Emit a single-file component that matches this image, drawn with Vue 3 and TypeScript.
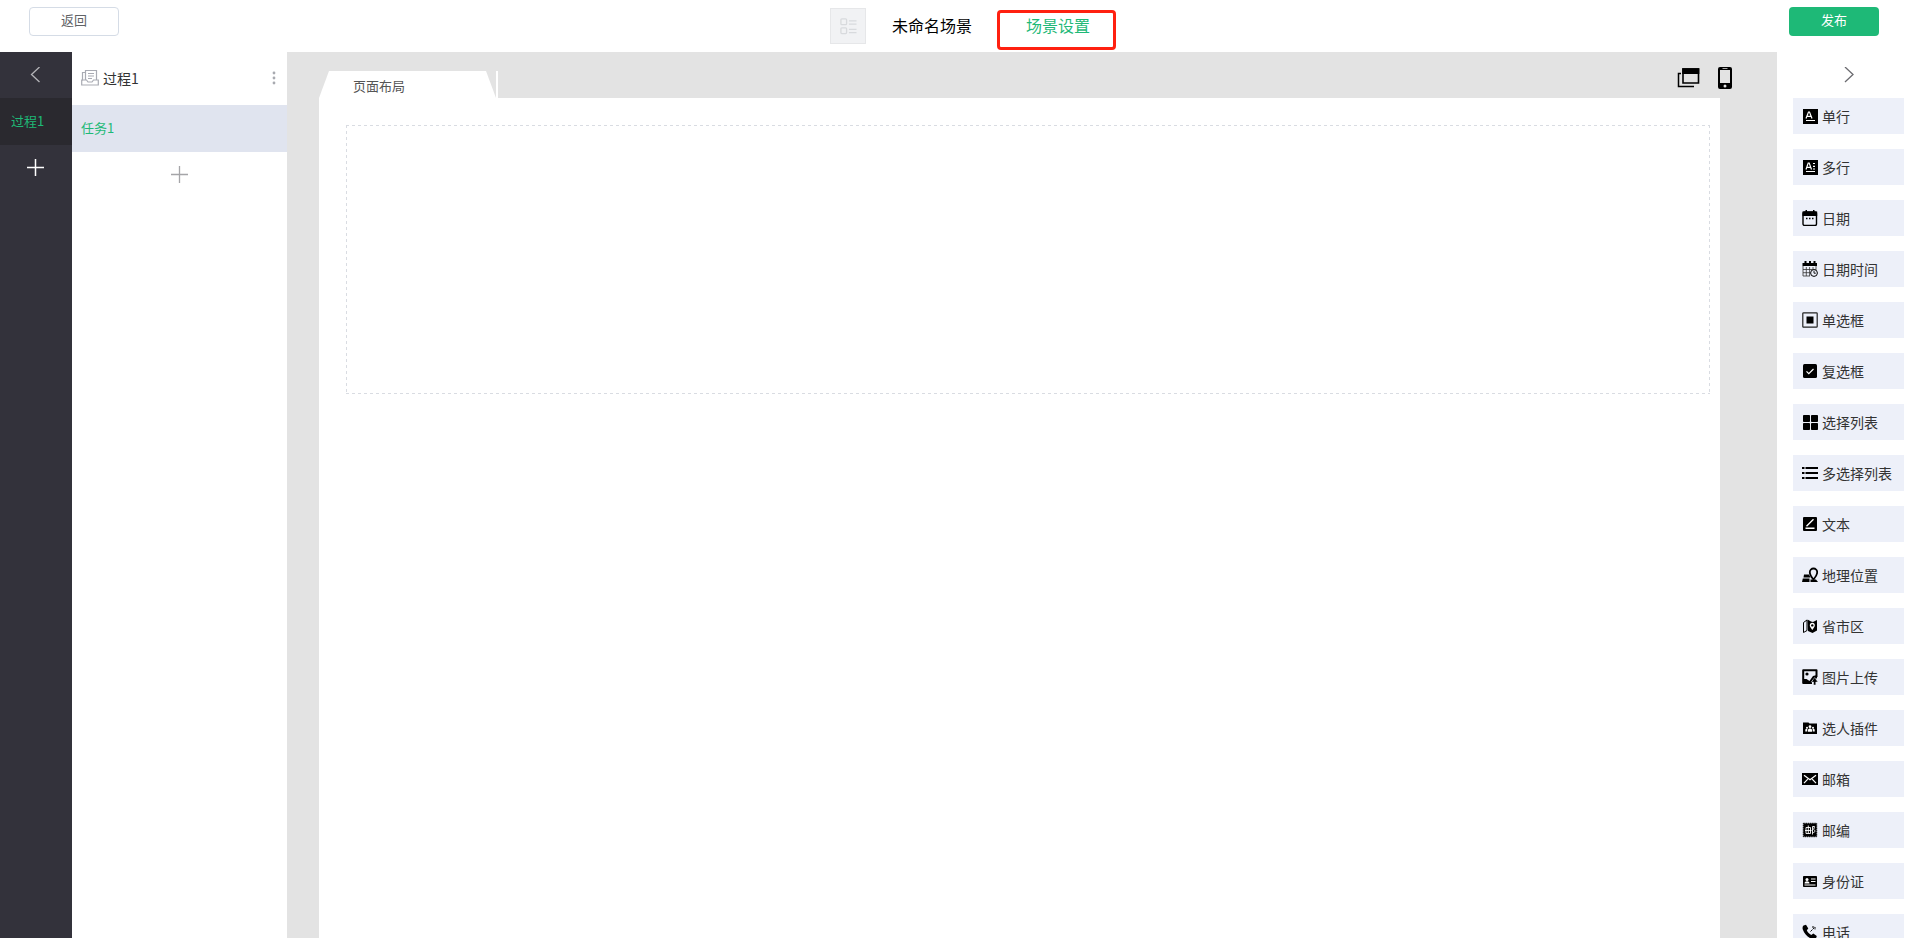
<script setup lang="ts">
import { ref } from 'vue'

interface Field {
  label: string
  icon: string
}

const fields: Field[] = [
  { label: '单行', icon: 'single' },
  { label: '多行', icon: 'multi' },
  { label: '日期', icon: 'date' },
  { label: '日期时间', icon: 'datetime' },
  { label: '单选框', icon: 'radio' },
  { label: '复选框', icon: 'check' },
  { label: '选择列表', icon: 'grid' },
  { label: '多选择列表', icon: 'list' },
  { label: '文本', icon: 'text' },
  { label: '地理位置', icon: 'location' },
  { label: '省市区', icon: 'map' },
  { label: '图片上传', icon: 'image' },
  { label: '选人插件', icon: 'people' },
  { label: '邮箱', icon: 'mail' },
  { label: '邮编', icon: 'post' },
  { label: '身份证', icon: 'idcard' },
  { label: '电话', icon: 'phone' },
]

const sceneName = ref('未命名场景')
</script>

<template>
  <div class="app">
    <header class="header">
      <button class="btn back" type="button">返回</button>
      <div class="scene">
        <button class="scene-icon" type="button" aria-label="场景图标">
          <svg viewBox="0 0 36 36" width="34" height="34" fill="none" stroke="#d8dadd" stroke-width="1.4">
            <rect x="10.5" y="10.5" width="6" height="6" rx="1" />
            <rect x="10.5" y="20" width="6" height="6" rx="1" />
            <path d="M19 12.5h8M19 16h8M19 21.5h8M19 25h8" />
          </svg>
        </button>
        <span class="scene-name">{{ sceneName }}</span>
        <button class="scene-setting" type="button">场景设置</button>
      </div>
      <button class="btn publish" type="button">发布</button>
    </header>

    <div class="body">
      <nav class="rail">
        <button class="rail-collapse" type="button" aria-label="收起">
          <svg viewBox="0 0 16 16" width="16" height="16" fill="none" stroke="#b4b4b8" stroke-width="1.3">
            <path d="M11.500 0 3.500 7.500l8 7.500" />
          </svg>
        </button>
        <button class="rail-item" type="button">过程1</button>
        <button class="rail-add" type="button" aria-label="添加过程">
          <svg viewBox="0 0 18 18" width="18" height="18" fill="none" stroke="#fff" stroke-width="1.500">
            <path d="M8.500 0v17M0 8.500h17" />
          </svg>
        </button>
      </nav>

      <aside class="tasks">
        <div class="tasks-head">
          <svg viewBox="0 0 18 17" width="18" height="17" fill="none" stroke="#a9abb3" stroke-width="1.200">
            <path d="M4.500 11V1.500h11V11M4.500 3.500H1.500v8M7 4.500h6M7 7h6M7 9.500h4" />
            <path d="M.7 11h4.800l1.500 2h4l1.500-2h4.800v5H.7z" />
          </svg>
          <span class="tasks-title">过程1</span>
          <button class="more" type="button" aria-label="更多">
            <svg viewBox="0 0 4 14" width="4" height="14" fill="#a8aab0">
              <circle cx="2" cy="2" r="1.400" />
              <circle cx="2" cy="7" r="1.400" />
              <circle cx="2" cy="12" r="1.400" />
            </svg>
          </button>
        </div>
        <button class="task" type="button">任务1</button>
        <button class="task-add" type="button" aria-label="添加任务">
          <svg viewBox="0 0 18 18" width="18" height="18" fill="none" stroke="#a5a5a8" stroke-width="1.300">
            <path d="M8.500 0v17M0 8.500h17" />
          </svg>
        </button>
      </aside>

      <main class="canvas">
        <div class="canvas-bar">
          <div class="tab-wrap">
            <button class="tab" type="button">页面布局</button>
          </div>
          <div class="devices">
            <button type="button" aria-label="桌面端">
              <svg viewBox="0 0 24 22" width="24" height="22">
                <path d="M6 2h15.500v14H6z" fill="none" stroke="#000" stroke-width="1.600" />
                <path d="M5.200 1.200h17.100V7H5.200z" />
                <path d="M4 6.500H1.500V19.500H17" fill="none" stroke="#000" stroke-width="1.500" />
              </svg>
            </button>
            <button type="button" aria-label="移动端">
              <svg viewBox="0 0 14 22" width="14" height="22">
                <path
                  fill-rule="evenodd"
                  d="M2 0h10a2 2 0 0 1 2 2v18a2 2 0 0 1-2 2H2a2 2 0 0 1-2-2V2a2 2 0 0 1 2-2zM2 3v13h10V3zM7 17.500a1.500 1.500 0 1 0 0 3 1.500 1.500 0 0 0 0-3zM4.500 1.200v.8h5v-.8z"
                />
              </svg>
            </button>
          </div>
        </div>
        <section class="page">
          <div class="dropzone"></div>
        </section>
      </main>

      <aside class="palette">
        <button class="palette-toggle" type="button" aria-label="展开">
          <svg viewBox="0 0 16 16" width="16" height="16" fill="none" stroke="#6b6b70" stroke-width="1.300">
            <path d="m4 0 8 7.500L4 15" />
          </svg>
        </button>
        <div class="fields">
          <button v-for="f in fields" :key="f.label" class="field" type="button">
            <svg class="field-icon" viewBox="0 0 16 16" width="16" height="16">
              <g v-if="f.icon === 'single'">
                <rect x="1" y="1" width="15" height="15" />
                <path d="M4 10.500 6.500 4h1L10 10.500M5 8.300h4M4 12.500h9" fill="none" stroke="#fff" stroke-width="1.200" />
              </g>
              <g v-else-if="f.icon === 'multi'">
                <rect x="1" y="1" width="15" height="15" />
                <path d="M4 10.500 6.200 4h1l2.300 6.500M5 8.300h3.500M4 12.500h9M11 4.500h2M11 7.300h2M11 10h2" fill="none" stroke="#fff" stroke-width="1.200" />
              </g>
              <g v-else-if="f.icon === 'date'">
                <rect x="1" y="2" width="13.500" height="13.500" rx="1.500" fill="none" stroke="#000" stroke-width="1.400" />
                <path d="M.5 1.500h3V0h1.500v1.500h6V0h1.500v1.500h2.700V6H.5z" />
                <path d="M4 8.500h1.500M7 8.500h1.500M10 8.500h1.500" stroke="#000" stroke-width="1.300" />
              </g>
              <g v-else-if="f.icon === 'datetime'">
                <path d="M.5 2h2V0h2v2h2.500V0h2v2h2.500V0h2v2h1.500v3H.5z" />
                <path d="M1 5v10h7M1 8.500h13M1 11.700h7M4.300 6v9M7.600 6v9M11 6v3M14 5v4" fill="none" stroke="#333" stroke-width=".8" />
                <circle cx="12" cy="12" r="3.400" fill="#edf0f9" stroke="#000" stroke-width="1" />
                <path d="M12 10v2.200h1.800" fill="none" stroke="#000" stroke-width=".9" />
              </g>
              <g v-else-if="f.icon === 'radio'">
                <rect x=".8" y=".8" width="14.400" height="14.400" rx=".8" fill="none" stroke="#222" stroke-width="1.200" />
                <rect x="4.500" y="4.500" width="7" height="7" />
              </g>
              <g v-else-if="f.icon === 'check'">
                <rect x="1" y="1" width="14" height="14" rx="1.500" />
                <path d="m4.500 8.300 2.300 2.300 4.700-4.600" fill="none" stroke="#fff" stroke-width="1.200" />
              </g>
              <g v-else-if="f.icon === 'grid'">
                <rect x="1" y="1" width="7" height="7" rx=".8" />
                <rect x="9" y="1" width="7" height="7" rx=".8" />
                <rect x="1" y="9" width="7" height="7" rx=".8" />
                <rect x="9" y="9" width="7" height="7" rx=".8" />
              </g>
              <g v-else-if="f.icon === 'list'" stroke="#000" stroke-width="2">
                <path d="M0 3h2.500M0 8h2.500M0 13h2.500M3.500 3H16M3.500 8H16M3.500 13H16" />
              </g>
              <g v-else-if="f.icon === 'text'">
                <rect x="1" y="1" width="14" height="14" rx="1" />
                <path d="M3.500 12.300H12.500M4.500 10.200l7-7" fill="none" stroke="#fff" stroke-width="1.400" />
              </g>
              <g v-else-if="f.icon === 'location'">
                <path d="M2 7.500h5l1.500 3H1.500zM.8 11.500h6.700V15H0zM8.500 12.500h5.500l2 2.500H8.500z" />
                <path d="M11.500 12.500C9 9.500 7.800 7.500 7.800 5.200a3.700 3.700 0 0 1 7.400 0c0 2.300-1.200 4.300-3.700 7.300z" fill="#edf0f9" stroke="#000" stroke-width="1.800" />
              </g>
              <g v-else-if="f.icon === 'map'">
                <path d="M1.500 4.500 5 2v10.500l-3.500 2z" fill="none" stroke="#000" />
                <path d="M5.500 1.500 9 3.500 11 4l4-2v10.500L10.500 15 6 13z" />
                <path d="M10.300 12C8.300 9.500 7.800 8.500 7.800 7.300a2.500 2.500 0 0 1 5 0c0 1.200-.5 2.200-2.500 4.700z" fill="#fff" />
                <circle cx="10.300" cy="7.400" r="1.200" />
              </g>
              <g v-else-if="f.icon === 'image'">
                <path d="M9 14H1.200V1.200h13.300V8" fill="none" stroke="#000" stroke-width="2" stroke-linejoin="round" />
                <circle cx="5" cy="5" r="1.600" />
                <path d="m1 10 3.500 0L7.500 12 11 7l4-1v3l-5 4v2H1z" />
                <path d="M12.500 16v-5" fill="none" stroke="#edf0f9" stroke-width="5" />
                <path d="M11.500 16v-3H9.300l3.400-4.500L16 13h-2.200v3z" stroke="#edf0f9" stroke-width=".5" />
              </g>
              <g v-else-if="f.icon === 'people'">
                <path d="M1 2.500h5.500l1 1H15V14H1z" />
                <g fill="#fff">
                  <circle cx="8" cy="6.700" r="1.400" />
                  <circle cx="5" cy="7.700" r="1" />
                  <circle cx="11" cy="7.700" r="1" />
                  <path d="M6 11.800V10c0-2 4-2 4 0v1.800zM3.300 11.500V10c0-1 .8-1.400 2-1.200v2.700zM12.700 11.500V10c0-1-.8-1.400-2-1.200v2.700z" />
                </g>
              </g>
              <g v-else-if="f.icon === 'mail'">
                <rect x="0" y="2" width="16" height="12" />
                <path d="m2 4.200 6 4.600 6-4.600M2 12.200l3.800-4M14 12.200l-3.800-4" fill="none" stroke="#fff" stroke-width="1.200" />
              </g>
              <g v-else-if="f.icon === 'post'">
                <rect x="1.500" y="1.500" width="13" height="13" />
                <rect x="1.300" y="1.300" width="13.400" height="13.400" fill="none" stroke="#000" stroke-dasharray="1.500 .7" />
                <path d="M4 5.500v6h4.500v-6zM6.300 3.500v8M3 8.500h6.500M10.500 12.500v-8H12.500L11.700 7.500c1.800 1 1.500 3-.7 3" fill="none" stroke="#fff" stroke-width=".9" />
              </g>
              <g v-else-if="f.icon === 'idcard'">
                <rect x="1" y="3" width="14" height="11" rx=".8" />
                <circle cx="5" cy="6.500" r="1.500" fill="#fff" />
                <path d="M2.500 10.500c0-3 5-3 5 0z" fill="#fff" />
                <path d="M9 6h4.500M9 8.500h4.500M2.500 12h11" stroke="#fff" />
              </g>
              <g v-else>
                <path d="M1.500 1.500 4 .8l2.300 3.700-1.500 1.800c.8 2 2.500 3.700 4.500 4.700l2-1.500 3.500 2.500-.8 2.500c-1 1-2.500 1.200-4 .5C6 13.500 2.500 10 .8 5.500.3 4 .5 2.500 1.500 1.500z" />
                <path d="m8.500 7.500 4-4M10 3h3v3" fill="none" stroke="#000" stroke-dasharray="2 .8" />
              </g>
            </svg>
            <span>{{ f.label }}</span>
          </button>
        </div>
      </aside>
    </div>
  </div>
</template>

<style>
body {
  overflow: hidden;
}
</style>

<style scoped>
.app {
  height: 100vh;
  display: flex;
  flex-direction: column;
  background: #fff;
  color: #333;
  font-family: "Noto Sans CJK SC", "Liberation Sans", sans-serif;
  font-size: 14px;
}
button {
  margin: 0;
  padding: 0;
  border: 0;
  background: none;
  color: inherit;
  font: inherit;
  cursor: pointer;
}
svg {
  display: block;
  flex: none;
}
.header {
  flex: none;
  display: grid;
  grid-template-columns: 1fr auto 1fr;
  height: 52px;
  padding: 0 41px 0 29px;
  box-sizing: border-box;
}
.btn {
  box-sizing: border-box;
  width: 90px;
  height: 29px;
  margin-top: 7px;
  padding-bottom: 4px;
  border-radius: 4px;
  font-size: 13px;
  line-height: 20px;
}
.back {
  border: 1px solid #d5dce6;
  color: #606266;
}
.publish {
  justify-self: end;
  background: #1eb977;
  color: #fff;
}
.scene {
  display: flex;
  align-items: flex-start;
  padding-left: 38px;
  font-size: 16px;
  line-height: 20px;
}
.scene-icon {
  margin-top: 8px;
  border: 1px solid #e6e7e9;
  background: #f1f2f4;
}
.scene-name {
  margin: 15px 25px 0 26px;
  color: #000;
}
.scene-setting {
  box-sizing: border-box;
  width: 119px;
  height: 40px;
  margin-top: 10px;
  padding: 0 0 10px 3px;
  border: 3px solid #ff2010;
  border-radius: 4px;
  color: #1eb977;
}
.body {
  flex: 1;
  min-height: 0;
  display: flex;
}
.rail {
  flex: none;
  width: 72px;
  display: flex;
  flex-direction: column;
  background: #33323b;
}
.rail-collapse,
.rail-add {
  display: flex;
  justify-content: center;
  align-items: center;
  height: 46px;
}
.rail-item {
  height: 47px;
  padding: 0 0 3px 11px;
  background: #2a292f;
  color: #1eb977;
  font-size: 13px;
  text-align: left;
}
.tasks {
  flex: none;
  width: 215px;
  display: flex;
  flex-direction: column;
}
.tasks-head {
  box-sizing: border-box;
  display: flex;
  align-items: center;
  height: 53px;
  padding: 0 11px 2px 9px;
}
.tasks-title {
  flex: 1;
  margin-left: 4px;
}
.task {
  height: 47px;
  padding: 0 0 2px 9px;
  background: #e0e4ef;
  color: #1eb977;
  font-size: 13px;
  text-align: left;
}
.task-add {
  display: flex;
  justify-content: center;
  align-items: center;
  height: 45px;
}
.canvas {
  flex: 1;
  min-width: 0;
  display: flex;
  flex-direction: column;
  padding: 0 57px 0 32px;
  background: #e3e3e3;
}
.canvas-bar {
  flex: none;
  display: flex;
  justify-content: space-between;
  align-items: flex-end;
  height: 46px;
}
.tab-wrap {
  border-right: 2px solid #fff;
}
.tab {
  display: block;
  width: 177px;
  height: 27px;
  padding: 2px 0 0 34px;
  background: #fff;
  clip-path: polygon(10px 0, 167px 0, 100% 100%, 0 100%);
  color: #555;
  font-size: 13px;
  line-height: 20px;
  text-align: left;
}
.devices {
  display: flex;
  align-items: center;
  gap: 17px;
  margin: 0 -12px 9px 0;
}
.page {
  flex: 1;
  padding: 27px 10px 0 27px;
  background: #fff;
}
.dropzone {
  --dash-x: repeating-linear-gradient(90deg, #d9dce2 0 3px, transparent 3px 6px);
  --dash-y: repeating-linear-gradient(180deg, #d9dce2 0 3px, transparent 3px 6px);
  height: 269px;
  background-image: var(--dash-x), var(--dash-x), var(--dash-y), var(--dash-y);
  background-position: left top, left bottom, left top, right top;
  background-size: 100% 1px, 100% 1px, 1px 100%, 1px 100%;
  background-repeat: no-repeat;
}
.palette {
  flex: none;
  width: 143px;
  min-height: 0;
  display: flex;
  flex-direction: column;
  overflow: hidden;
}
.palette-toggle {
  flex: none;
  display: flex;
  justify-content: center;
  align-items: center;
  height: 46px;
}
.fields {
  display: flex;
  flex-direction: column;
  gap: 15px;
  padding: 0 16px;
}
.field {
  flex: none;
  display: flex;
  align-items: center;
  gap: 4px;
  height: 36px;
  padding-left: 9px;
  background: #edf0f9;
  line-height: 20px;
  white-space: nowrap;
}
</style>
